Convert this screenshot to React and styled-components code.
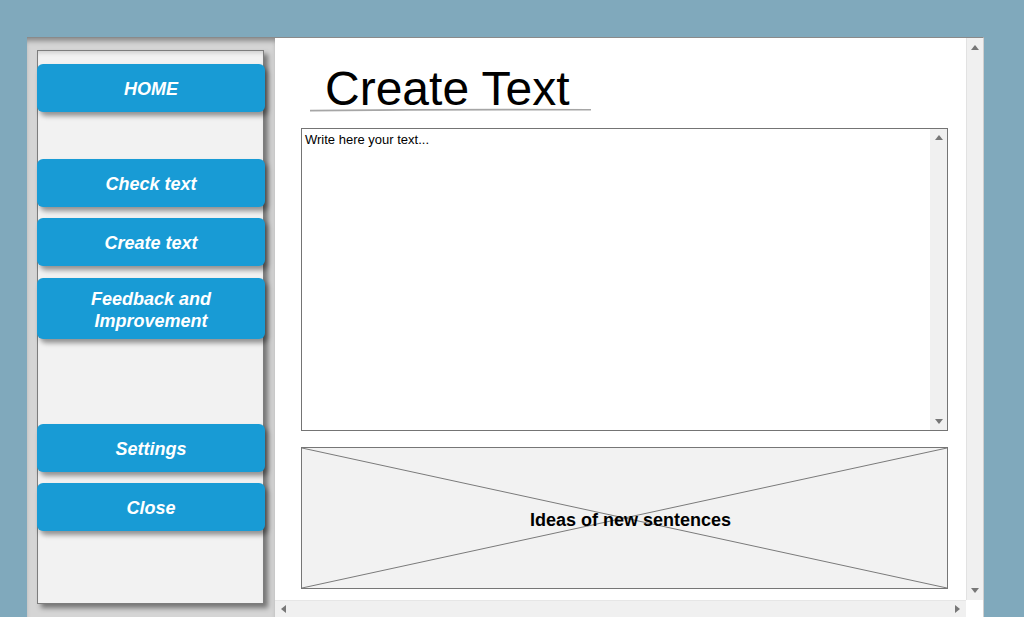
import styled, { createGlobalStyle } from 'styled-components'

const GlobalStyle = createGlobalStyle`
  html, body {
    margin: 0;
    padding: 0;
    background: #80a9bc;
    font-family: 'Liberation Sans', Arial, sans-serif;
    overflow: hidden;
  }
`

const Window = styled.div`
  margin: 37px 0 0 27px;
  width: 957px;
  height: 580px;
  box-sizing: border-box;
  border-top: 1px solid #8a8a8a;
  border-right: 1px solid #cfcfcf;
  display: flex;
`

const Sidebar = styled.aside`
  width: 248px;
  flex: none;
  box-sizing: border-box;
  padding: 12px 11px 0 10px;
  background: #d5d5d5;
  box-shadow: inset 0 5px 5px -2px rgba(0, 0, 0, 0.35);
`

const Panel = styled.nav`
  height: 554px;
  box-sizing: border-box;
  border: 1px solid #7d7d7d;
  background: #f2f2f2;
  box-shadow: 4px 4px 5px rgba(0, 0, 0, 0.45), inset 0 4px 4px -2px rgba(0, 0, 0, 0.15);
  display: flex;
  flex-direction: column;
`

const NavButton = styled.button`
  margin: ${(p) => p.$top}px -2px 0 -1px;
  height: ${(p) => p.$h || 48}px;
  border: none;
  border-radius: 6px;
  background: #189bd5;
  color: #fff;
  font-family: 'Liberation Sans', Arial, sans-serif;
  font-size: 18px;
  font-weight: bold;
  font-style: italic;
  line-height: 22px;
  text-align: center;
  padding: 2px 10px 0;
  box-shadow: 3px 4px 5px rgba(0, 0, 0, 0.4);
  cursor: pointer;
`

const Main = styled.section`
  flex: 1;
  display: grid;
  grid-template-columns: 1fr 17px;
  grid-template-rows: 1fr 17px;
  background: #fff;
`

const Content = styled.div`
  padding: 0 18px 0 26px;
  display: flex;
  flex-direction: column;
`

const TitleBlock = styled.div`
  margin: 32px 0 0 9px;
  width: 281px;
`

const Heading = styled.h1`
  margin: 0;
  padding-left: 15px;
  font-size: 48px;
  font-weight: normal;
  line-height: 38px;
  color: #000;
  white-space: nowrap;
`

const Underline = styled.svg`
  display: block;
  width: 281px;
  height: 4px;
`

const TextBox = styled.div`
  margin-top: 16px;
  height: 303px;
  box-sizing: border-box;
  border: 1px solid #747474;
  display: grid;
  grid-template-columns: 1fr 17px;
`

const TextArea = styled.div`
  padding: 3px 3px;
  font-size: 13px;
  line-height: 16px;
  color: #000;
`

const VScroll = styled.div`
  background: #f0f0f0;
  border-left: 1px solid ${(p) => (p.$edge ? '#e2e2e2' : '#f0f0f0')};
  display: flex;
  flex-direction: column;
  justify-content: space-between;
  align-items: center;
  padding: ${(p) => p.$pad || '7px 0'};
`

const HScroll = styled.div`
  background: #f0f0f0;
  border-top: 1px solid #e6e6e6;
  display: flex;
  justify-content: space-between;
  align-items: center;
  padding: 0 6px 0 6px;
`

const Corner = styled.div`
  background: #fff;
`

const Arrow = styled.span`
  width: 0;
  height: 0;
  border-style: solid;
  border-color: transparent;
  ${(p) =>
    p.$dir === 'up'
      ? 'border-width: 0 4.5px 5px 4.5px; border-bottom-color: #777;'
      : p.$dir === 'down'
      ? 'border-width: 5px 4.5px 0 4.5px; border-top-color: #777;'
      : p.$dir === 'left'
      ? 'border-width: 4.5px 5px 4.5px 0; border-right-color: #777;'
      : 'border-width: 4.5px 0 4.5px 5px; border-left-color: #777;'}
`

const Placeholder = styled.div`
  position: relative;
  margin-top: 16px;
  height: 142px;
  box-sizing: border-box;
  border: 1px solid #767676;
  background: #f2f2f2;
  display: flex;
  align-items: center;
  justify-content: center;
`

const Cross = styled.svg`
  position: absolute;
  inset: 0;
  width: 100%;
  height: 100%;
`

const PlaceholderLabel = styled.span`
  position: relative;
  margin: 5px 0 0 12px;
  font-size: 18px;
  font-weight: bold;
  color: #000;
`

const buttons = [
  { label: 'HOME', top: 13 },
  { label: 'Check text', top: 47 },
  { label: 'Create text', top: 11 },
  { label: 'Feedback and\nImprovement', top: 12, h: 61 },
  { label: 'Settings', top: 85 },
  { label: 'Close', top: 11 },
]

export default function App() {
  return (
    <>
      <GlobalStyle />
      <Window>
        <Sidebar>
          <Panel>
            {buttons.map((b) => (
              <NavButton key={b.label} $top={b.top} $h={b.h}>
                {b.label.split('\n').map((line, i) => (
                  <div key={i}>{line}</div>
                ))}
              </NavButton>
            ))}
          </Panel>
        </Sidebar>
        <Main>
          <Content>
            <TitleBlock>
              <Heading>Create Text</Heading>
              <Underline viewBox="0 0 281 4">
                <path d="M0 2.6 Q140 1.2 281 1.8" stroke="#a6a6a6" strokeWidth="1.6" fill="none" />
              </Underline>
            </TitleBlock>
            <TextBox>
              <TextArea>Write here your text...</TextArea>
              <VScroll $pad="6px 0 6px">
                <Arrow $dir="up" />
                <Arrow $dir="down" />
              </VScroll>
            </TextBox>
            <Placeholder>
              <Cross preserveAspectRatio="none" viewBox="0 0 100 100">
                <line x1="0" y1="0" x2="100" y2="100" stroke="#7a7a7a" strokeWidth="1" vectorEffect="non-scaling-stroke" />
                <line x1="100" y1="0" x2="0" y2="100" stroke="#7a7a7a" strokeWidth="1" vectorEffect="non-scaling-stroke" />
              </Cross>
              <PlaceholderLabel>Ideas of new sentences</PlaceholderLabel>
            </Placeholder>
          </Content>
          <VScroll $edge>
            <Arrow $dir="up" />
            <Arrow $dir="down" />
          </VScroll>
          <HScroll>
            <Arrow $dir="left" />
            <Arrow $dir="right" />
          </HScroll>
          <Corner />
        </Main>
      </Window>
    </>
  )
}
